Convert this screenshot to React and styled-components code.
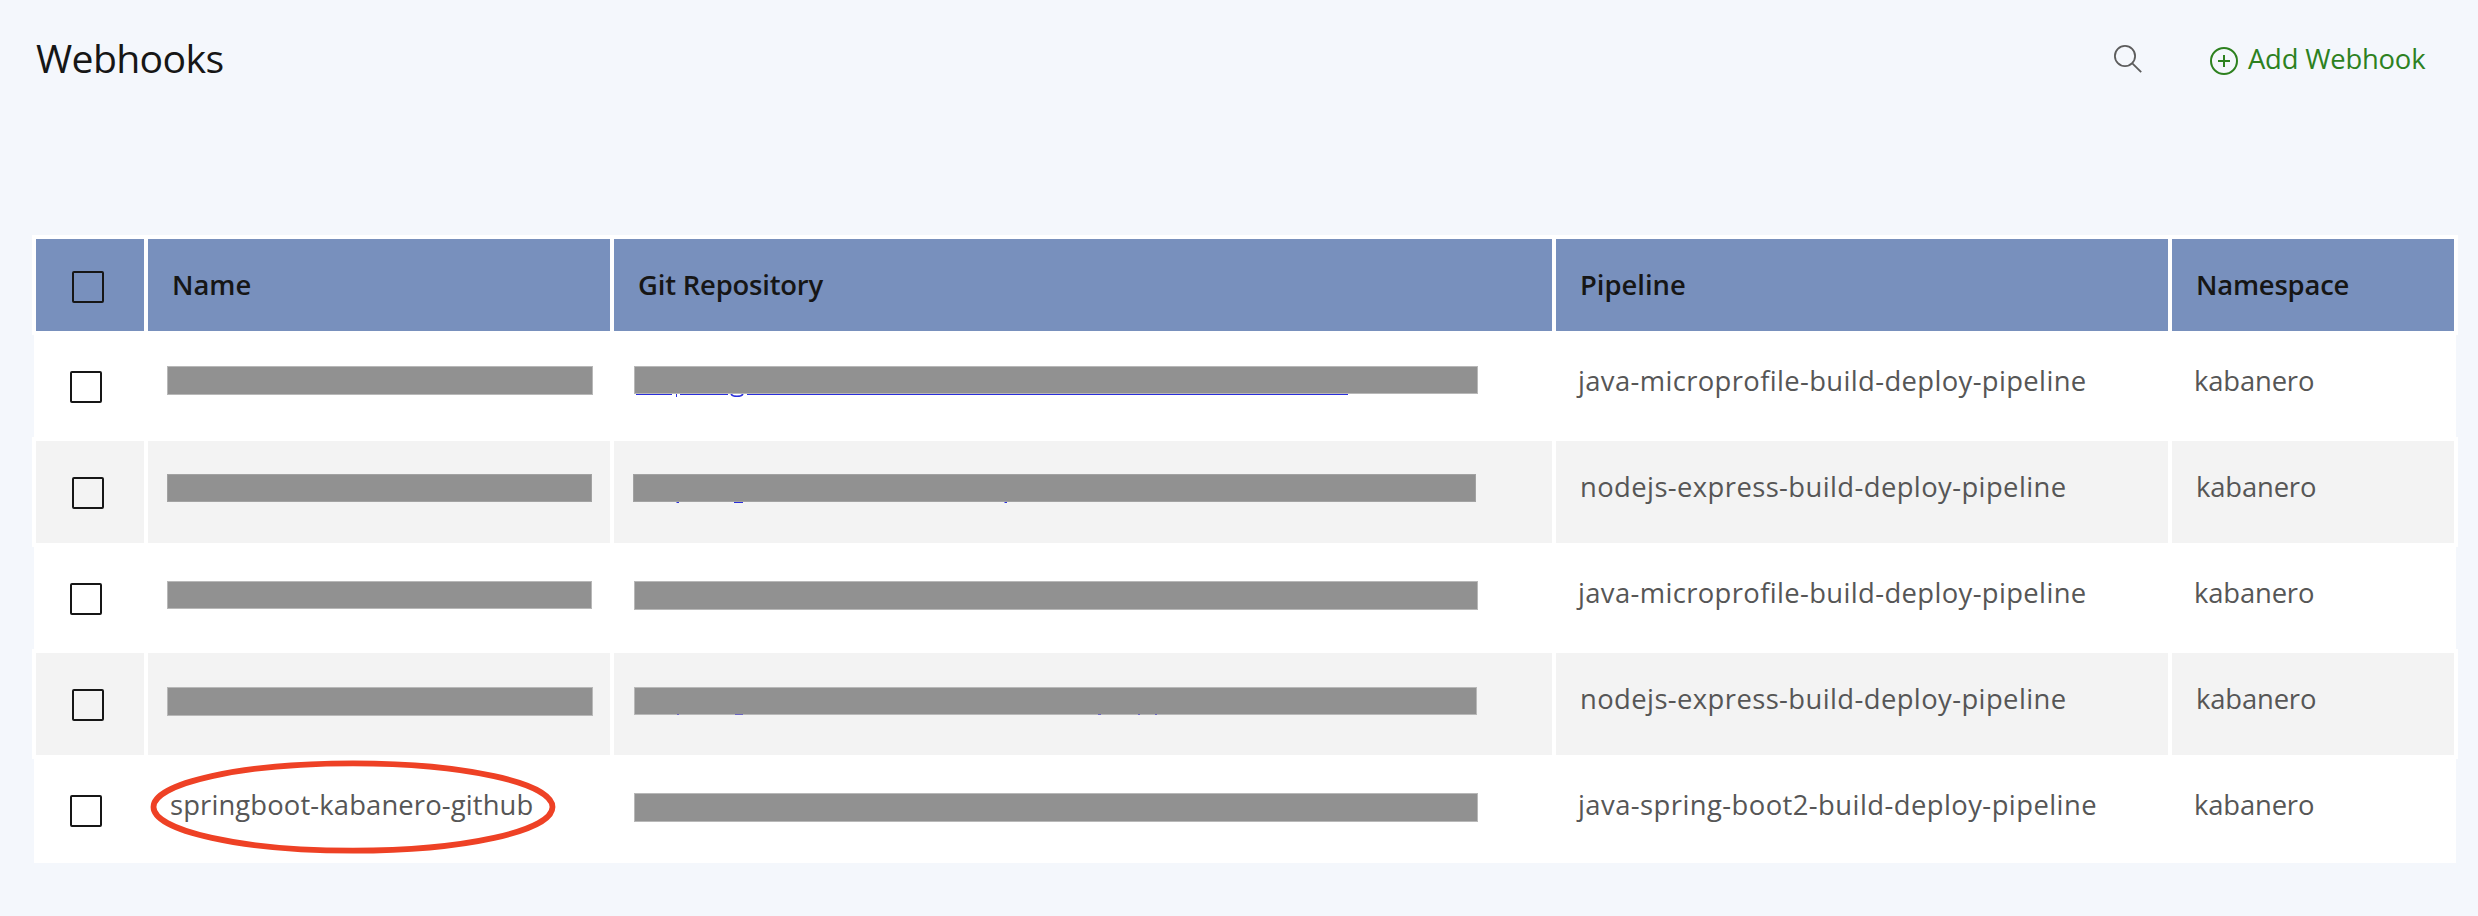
import React from "react";
import styled, { createGlobalStyle } from "styled-components";

const GlobalStyle = createGlobalStyle`
  * { box-sizing: border-box; }
  body {
    margin: 0;
    background: #f4f7fc;
    font-family: "Open Sans", "Noto Sans", sans-serif;
  }
`;

const Page = styled.main`
  width: 2478px;
  height: 916px;
  overflow: hidden;
`;

const Toolbar = styled.header`
  display: flex;
  align-items: flex-start;
  height: 235px;
  padding: 33px 51px 0 36px;
`;

const Title = styled.h1`
  flex: 1;
  margin: 0;
  font-size: 39.2px;
  font-weight: 400;
  line-height: 50px;
  letter-spacing: -0.65px;
  color: #161616;
`;

const IconButton = styled.button`
  display: flex;
  margin: 12px 68px 0 0;
  padding: 0;
  border: 0;
  background: none;
  color: #5c5c5c;
`;

const AddButton = styled.button`
  display: flex;
  gap: 10px;
  width: 217px;
  margin: 8px 0 0;
  padding: 0;
  border: 0;
  background: none;
  font-family: inherit;
  font-size: 27.4px;
  line-height: 36px;
  letter-spacing: -0.2px;
  white-space: nowrap;
  color: #2d811f;

  svg {
    flex: none;
    margin-top: 6px;
  }
`;

const Table = styled.div`
  display: flex;
  flex-direction: column;
  width: 2426px;
  margin-left: 32px;
`;

const Row = styled.div`
  display: grid;
  grid-template-columns: 108px 462px 938px 612px 1fr;
  column-gap: 4px;
  height: ${(p) => p.$height}px;
  background: #fff;
  ${(p) => (p.$bordered ? "border: 4px solid #fff;" : "margin: 0 2px;")}
`;

const Cell = styled.div`
  display: flow-root;
  position: relative;
  background: ${(p) => p.$fill || "#fff"};
`;

const CellText = styled.div`
  padding: 28px 0 0 24px;
  font-size: 27.4px;
  font-weight: ${(p) => (p.$heading ? 600 : 400)};
  line-height: 36px;
  letter-spacing: ${(p) => p.$spacing || 0}px;
  font-variant-ligatures: none;
  white-space: nowrap;
  color: ${(p) => (p.$heading ? "#161616" : "#565656")};
`;

const Checkbox = styled.div`
  width: 32px;
  height: 32px;
  margin: ${(p) => p.$top}px 0 0 36px;
  border: 2px solid #161616;
  border-radius: 2px;
`;

const Redacted = styled.div`
  position: relative;
  width: ${(p) => p.$w}px;
  height: ${(p) => p.$h}px;
  margin: ${(p) => p.$y}px 0 0 ${(p) => p.$x}px;
  border: 1px solid ${(p) => p.$edge || "#b8b8b8"};
  background: #919191;
`;

const LinkTrace = styled.svg`
  position: absolute;
  left: -1px;
  top: ${(p) => p.$top}px;
`;

const Highlight = styled.svg`
  position: absolute;
  left: 4px;
  top: 1px;
`;

const SearchIcon = () => (
  <svg width="28" height="28" viewBox="0 0 28 28" fill="none" stroke="currentColor" strokeWidth="1.8">
    <circle cx="11" cy="11" r="10.1" />
    <path d="M18.3 18.3 27.2 27.2" />
  </svg>
);

const AddIcon = () => (
  <svg width="28" height="28" viewBox="0 0 28 28" fill="none" stroke="currentColor" strokeWidth="2">
    <circle cx="14" cy="14" r="13" />
    <path d="M14 8v12M8 14h12" />
  </svg>
);

const HEADINGS = [
  { label: "Name", spacing: 0 },
  { label: "Git Repository", spacing: -0.18 },
  { label: "Pipeline", spacing: 0 },
  { label: "Namespace", spacing: -0.2 },
];

const JAVA = { label: "java-microprofile-build-deploy-pipeline", spacing: 0.37 };
const NODE = { label: "nodejs-express-build-deploy-pipeline", spacing: 0.41 };
const SPRING = { label: "java-spring-boot2-build-deploy-pipeline", spacing: 0.44 };

const ROWS = [
  {
    nameBar: { x: 21, y: 31, w: 426, h: 29 },
    repoBar: { x: 22, y: 31, w: 844, h: 28 },
    trace: { top: 27, d: "M2 .5H38M46 .5H94M113 .5H714M42.5 0V3", curve: "M97 0Q98.5 2.3 103 2.3T109 0" },
    pipeline: JAVA,
  },
  {
    nameBar: { x: 19, y: 33, w: 425, h: 28, edge: "#a2a2a2" },
    repoBar: { x: 19, y: 33, w: 843, h: 28, edge: "#a2a2a2" },
    trace: { top: 27, d: "M43.5 .5H46M101 .5H110M371.5 .5H374" },
    pipeline: NODE,
  },
  {
    nameBar: { x: 21, y: 34, w: 425, h: 28 },
    repoBar: { x: 22, y: 34, w: 844, h: 29 },
    pipeline: JAVA,
  },
  {
    nameBar: { x: 19, y: 34, w: 426, h: 29 },
    repoBar: { x: 20, y: 34, w: 843, h: 28 },
    trace: { top: 26, faint: true, d: "M43 .5H45M101 .5H109M464 .5H467M504 .5H506M521 .5H523" },
    pipeline: NODE,
  },
  {
    name: { label: "springboot-kabanero-github", spacing: 0.13 },
    repoBar: { x: 22, y: 34, w: 844, h: 29 },
    pipeline: SPRING,
  },
];

const Bar = ({ bar, children }) => (
  <Redacted $x={bar.x} $y={bar.y} $w={bar.w} $h={bar.h} $edge={bar.edge}>
    {children}
  </Redacted>
);

const WebhookRow = ({ row, index }) => {
  const striped = index % 2 === 1;
  const fill = striped ? "#f3f3f3" : "#fff";
  const height = striped ? 110 : index === ROWS.length - 1 ? 104 : 102;
  return (
    <Row $bordered={striped} $height={height}>
      <Cell $fill={fill}>
        <Checkbox $top={36} />
      </Cell>
      <Cell $fill={fill}>
        {row.name ? (
          <>
            <CellText $spacing={row.name.spacing}>{row.name.label}</CellText>
            <Highlight width="406" height="94" viewBox="0 0 406 94" fill="none">
              <ellipse cx="203" cy="47" rx="199.5" ry="43.7" stroke="#ee4125" strokeWidth="5.8" />
            </Highlight>
          </>
        ) : (
          <Bar bar={row.nameBar} />
        )}
      </Cell>
      <Cell $fill={fill}>
        <Bar bar={row.repoBar}>
          {row.trace && (
            <LinkTrace $top={row.trace.top} width="844" height="4" fill="none" stroke={row.trace.faint ? "#6c66c4" : "#2a2fdc"}>
              <path d={row.trace.d} />
              {row.trace.curve && <path d={row.trace.curve} strokeWidth="1.5" />}
            </LinkTrace>
          )}
        </Bar>
      </Cell>
      <Cell $fill={fill}>
        <CellText $spacing={row.pipeline.spacing}>{row.pipeline.label}</CellText>
      </Cell>
      <Cell $fill={fill}>
        <CellText $spacing={-0.15}>kabanero</CellText>
      </Cell>
    </Row>
  );
};

export default function App() {
  return (
    <>
      <GlobalStyle />
      <Page>
        <Toolbar>
          <Title>Webhooks</Title>
          <IconButton aria-label="Search">
            <SearchIcon />
          </IconButton>
          <AddButton>
            <AddIcon />
            Add Webhook
          </AddButton>
        </Toolbar>
        <Table>
          <Row $bordered $height={100}>
            <Cell $fill="#7890bd">
              <Checkbox $top={32} />
            </Cell>
            {HEADINGS.map((h) => (
              <Cell key={h.label} $fill="#7890bd">
                <CellText $heading $spacing={h.spacing}>
                  {h.label}
                </CellText>
              </Cell>
            ))}
          </Row>
          {ROWS.map((row, i) => (
            <WebhookRow key={i} row={row} index={i} />
          ))}
        </Table>
      </Page>
    </>
  );
}
